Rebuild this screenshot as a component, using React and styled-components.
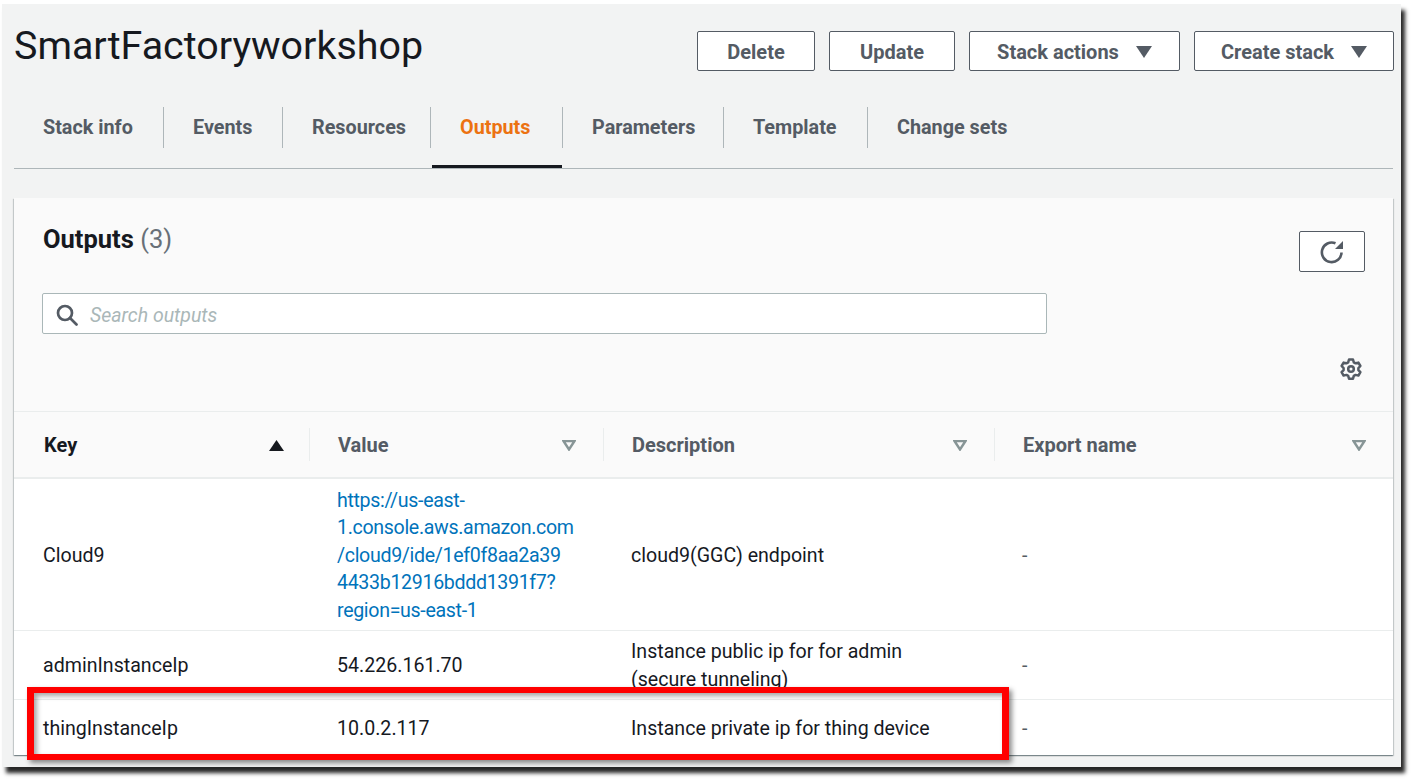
import React from 'react'
import styled, { createGlobalStyle } from 'styled-components'

const GlobalStyle = createGlobalStyle`
    html, body {
        margin: 0;
        padding: 0;
        background: #fff;
    }
    body {
        font-family: "Roboto", "Liberation Sans", sans-serif;
        color: #16191f;
    }
`;

const Page = styled.div`
    box-sizing: border-box;
    width: 1416px;
    height: 783px;
    padding: 4px 0 0 2px;
    overflow: hidden;
`;

const Frame = styled.div`
    position: relative;
    box-sizing: border-box;
    width: 1399px;
    height: 763px;
    padding: 27px 7px 0 12px;
    background: #f2f3f3;
    box-shadow: 4px 6px 4px 0 rgba(0, 0, 0, .85);
`;

const Header = styled.div`
    display: flex;
    justify-content: space-between;
    align-items: flex-start;
`;

const Title = styled.h1`
    margin: -7px 0 0 0;
    font-size: 39.4px;
    line-height: 44px;
    font-weight: 400;
`;

const Actions = styled.div`
    display: flex;
    gap: 14px;
`;

const Button = styled.button`
    box-sizing: border-box;
    display: flex;
    align-items: center;
    justify-content: center;
    gap: 17px;
    width: ${p => p.$w}px;
    height: 40px;
    padding: 2px 0 0;
    background: #fff;
    border: 1px solid #545b64;
    border-radius: 2px;
    color: #545b64;
    font-family: inherit;
    font-size: 20px;
    font-weight: 700;
`;

const Tabs = styled.div`
    display: flex;
    height: 61px;
    margin: 36px 1px 0 0;
    border-bottom: 1px solid #aeb6b9;
`;

const Tab = styled.div`
    position: relative;
    box-sizing: border-box;
    width: ${p => p.$w}px;
    height: 41px;
    display: flex;
    align-items: center;
    padding-left: 29px;
    border-right: ${p => p.$last ? 'none' : '1px solid #aeb6b9'};
    color: ${p => p.$active ? '#ec7211' : '#545b64'};
    font-size: 19.8px;
    font-weight: 700;
    white-space: nowrap;

    ${p => p.$active && `
        &::after {
            content: "";
            position: absolute;
            left: 1px;
            right: 0;
            top: 58px;
            height: 3px;
            background: #16191f;
        }
    `}
`;

const Card = styled.div`
    box-sizing: border-box;
    height: 557px;
    margin: 29px 1px 0 0;
    background: #fafafa;
    box-shadow: 0 1px 1px 0 rgba(0, 28, 36, .3), 1px 1px 1px 0 rgba(0, 28, 36, .15), -1px 1px 1px 0 rgba(0, 28, 36, .15);
`;

const CardHead = styled.div`
    padding: 33px 28px 31px 28px;
`;

const TitleRow = styled.div`
    display: flex;
    justify-content: space-between;
    align-items: flex-start;
`;

const CardTitle = styled.h2`
    margin: 0 0 0 1px;
    font-size: 25.5px;
    line-height: 16px;
    font-weight: 700;

    span {
        font-weight: 400;
        color: #687078;
    }
`;

const IconButton = styled.button`
    box-sizing: border-box;
    display: flex;
    align-items: center;
    justify-content: center;
    width: 66px;
    height: 41px;
    padding: 0;
    background: #fff;
    border: 1px solid #545b64;
    border-radius: 2px;
    color: #545b64;
`;

const SearchBox = styled.div`
    box-sizing: border-box;
    display: flex;
    align-items: center;
    gap: 12px;
    width: 1005px;
    height: 41px;
    margin-top: 21px;
    padding: 3px 0 0 13px;
    background: #fff;
    border: 1px solid #aab7b8;
    border-radius: 2px;
    color: #545b64;
`;

const Placeholder = styled.span`
    margin-top: 1px;
    font-size: 19.5px;
    font-style: italic;
    color: #aab7b8;
`;

const GearRow = styled.div`
    display: flex;
    justify-content: flex-end;
    height: 22px;
    margin-top: 24px;
    padding-right: 3px;
    color: #545b64;
`;

const Row = styled.div`
    display: grid;
    grid-template-columns: 296px 294px 391px 398px;
    align-items: center;
    height: ${p => p.$h}px;
    box-sizing: border-box;
    padding-top: 2px;
    background: #fff;
    border-top: 1px solid #eaeded;
    font-size: 19.6px;
    line-height: 27.6px;
`;

const HeadRow = styled(Row)`
    padding-top: 0;
    background: #fafafa;
    border-bottom: 1px solid #eaeded;
`;

const HeadCell = styled.div`
    box-sizing: border-box;
    display: flex;
    align-items: center;
    justify-content: space-between;
    height: 33px;
    padding: 2px ${p => p.$first ? 25 : 27}px 0 ${p => p.$first ? 30 : 28}px;
    border-right: ${p => p.$last ? 'none' : '1px solid #eaeded'};
    color: ${p => p.$sorted ? '#16191f' : '#545b64'};
    font-size: 20px;
    font-weight: 700;
`;

const Cell = styled.div`
    padding-left: ${p => p.$first ? 29 : 27}px;
    color: ${p => p.$muted ? '#545b64' : '#16191f'};
`;

const Link = styled.a`
    color: #0073bb;
    text-decoration: none;
    letter-spacing: -0.33px;
`;

const Highlight = styled.div`
    position: absolute;
    left: 25px;
    top: 683px;
    box-sizing: border-box;
    width: 982px;
    height: 73px;
    border: solid #ff0000;
    border-width: 6px 7px;
    box-shadow: 3px 3px 5px rgba(0, 0, 0, .45), inset 3px 3px 5px rgba(0, 0, 0, .35);
`;

const Caret = () => (
    <svg width="16" height="12" viewBox="0 0 16 12">
        <path d="M0 0H16L8 12Z" fill="#545b64" />
    </svg>
)

const SortUp = () => (
    <svg width="15" height="11" viewBox="0 0 15 11">
        <path d="M0 11L7.5 0L15 11Z" fill="#16191f" />
    </svg>
)

const SortIdle = () => (
    <svg width="14" height="11" viewBox="0 0 14 11">
        <path d="M1.5 1H12.5L7 9.5Z" fill="none" stroke="#879596" strokeWidth="2.4" />
    </svg>
)

const SearchIcon = () => (
    <svg width="22" height="22" viewBox="0 0 22 22" fill="none" stroke="currentColor" strokeWidth="2.7">
        <circle cx="9" cy="9" r="7" />
        <path d="M14 14L20.5 20.5" strokeLinecap="round" />
    </svg>
)

const RefreshIcon = () => (
    <svg width="24" height="24" viewBox="0 0 24 24" fill="none" stroke="currentColor" strokeWidth="2.6">
        <path d="M21.5 12.5A9.8 9.8 0 1 1 15.5 3.3" />
        <path d="M23 1V9H15Z" fill="currentColor" stroke="none" />
    </svg>
)

const GearIcon = () => (
    <svg width="22" height="22" viewBox="0 0 22 22" fill="none" stroke="currentColor" strokeWidth="2.5">
        <path d="M9 1.5h4l.8 2.8 1.8 1 2.8-.7 2 3.4-2 2.1v2l2 2.1-2 3.4-2.8-.7-1.8 1-.8 2.8H9l-.8-2.8-1.8-1-2.8.7-2-3.4 2-2.1v-2l-2-2.1 2-3.4 2.8.7 1.8-1z" strokeLinejoin="round" />
        <circle cx="11" cy="11" r="2.8" />
    </svg>
)

const tabs = [
    { name: 'Stack info', w: 150 },
    { name: 'Events', w: 119 },
    { name: 'Resources', w: 148 },
    { name: 'Outputs', w: 132, active: true },
    { name: 'Parameters', w: 161 },
    { name: 'Template', w: 144 },
    { name: 'Change sets', w: 160, last: true },
]

const columns = ['Value', 'Description', 'Export name']

export default function App() {
    return (
        <Page>
            <GlobalStyle />
            <Frame>
                <Header>
                    <Title>SmartFactoryworkshop</Title>
                    <Actions>
                        <Button $w={118}>Delete</Button>
                        <Button $w={126}>Update</Button>
                        <Button $w={211}>Stack actions <Caret /></Button>
                        <Button $w={200}>Create stack <Caret /></Button>
                    </Actions>
                </Header>
                <Tabs>
                    {tabs.map(t => (
                        <Tab key={t.name} $w={t.w} $active={t.active} $last={t.last}>{t.name}</Tab>
                    ))}
                </Tabs>
                <Card>
                    <CardHead>
                        <TitleRow>
                            <CardTitle>Outputs <span>(3)</span></CardTitle>
                            <IconButton><RefreshIcon /></IconButton>
                        </TitleRow>
                        <SearchBox>
                            <SearchIcon />
                            <Placeholder>Search outputs</Placeholder>
                        </SearchBox>
                        <GearRow><GearIcon /></GearRow>
                    </CardHead>
                    <HeadRow $h={67}>
                        <HeadCell $first $sorted>Key <SortUp /></HeadCell>
                        {columns.map((c, i) => (
                            <HeadCell key={c} $last={i === 2}>{c} <SortIdle /></HeadCell>
                        ))}
                    </HeadRow>
                    <Row $h={152}>
                        <Cell $first>Cloud9</Cell>
                        <Cell>
                            <Link href="#">
                                https://us-east-<br />
                                1.console.aws.amazon.com<br />
                                /cloud9/ide/1ef0f8aa2a39<br />
                                4433b12916bddd1391f7?<br />
                                region=us-east-1
                            </Link>
                        </Cell>
                        <Cell>cloud9(GGC) endpoint</Cell>
                        <Cell $muted>-</Cell>
                    </Row>
                    <Row $h={69}>
                        <Cell $first>adminInstanceIp</Cell>
                        <Cell>54.226.161.70</Cell>
                        <Cell>Instance public ip for for admin<br />(secure tunneling)</Cell>
                        <Cell $muted>-</Cell>
                    </Row>
                    <Row $h={56}>
                        <Cell $first>thingInstanceIp</Cell>
                        <Cell>10.0.2.117</Cell>
                        <Cell>Instance private ip for thing device</Cell>
                        <Cell $muted>-</Cell>
                    </Row>
                </Card>
                <Highlight />
            </Frame>
        </Page>
    )
}
